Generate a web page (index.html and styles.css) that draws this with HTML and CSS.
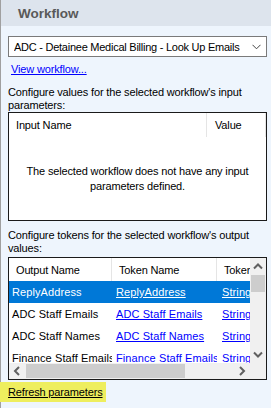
FILE: index.html
```html
<!DOCTYPE html>
<html>
<head>
<meta charset="utf-8">
<link rel="stylesheet" href="styles.css">
</head>
<body>
<div class="panel">
  <div class="header"><span class="title">Workflow</span></div>
  <div class="content">
    <div class="combo">
      <span class="combo-text">ADC - Detainee Medical Billing - Look Up Emails</span>
      <svg class="combo-arrow" width="9" height="6" viewBox="0 0 9 6"><path d="M0.5 0.8 L4.5 4.8 L8.5 0.8" fill="none" stroke="#444" stroke-width="1"/></svg>
    </div>
    <a class="link view-link">View workflow...</a>
    <div class="label label-in">Configure values for the selected workflow's input parameters:</div>
    <div class="box in-box">
      <div class="in-head">
        <div class="hcell in-c1">Input Name</div>
        <div class="hcell in-c2">Value</div>
      </div>
      <div class="empty-msg">The selected workflow does not have any input parameters defined.</div>
    </div>
    <div class="label label-out">Configure tokens for the selected workflow's output values:</div>
    <div class="box out-box">
      <div class="out-main">
        <div class="viewport">
          <div class="orow ohead">
            <div class="hcell oc1">Output Name</div>
            <div class="hcell oc2">Token Name</div>
            <div class="hcell oc3">Token Type</div>
          </div>
          <div class="orow drow selected">
            <div class="dcell oc1">ReplyAddress</div>
            <div class="dcell oc2"><span class="u">ReplyAddress</span></div>
            <div class="dcell oc3"><span class="u">String</span></div>
          </div>
          <div class="orow drow">
            <div class="dcell oc1">ADC Staff Emails</div>
            <div class="dcell oc2"><span class="u">ADC Staff Emails</span></div>
            <div class="dcell oc3"><span class="u">String</span></div>
          </div>
          <div class="orow drow">
            <div class="dcell oc1">ADC Staff Names</div>
            <div class="dcell oc2"><span class="u">ADC Staff Names</span></div>
            <div class="dcell oc3"><span class="u">String</span></div>
          </div>
          <div class="orow drow">
            <div class="dcell oc1">Finance Staff Emails</div>
            <div class="dcell oc2"><span class="u">Finance Staff Emails</span></div>
            <div class="dcell oc3"><span class="u">String</span></div>
          </div>
        </div>
        <div class="vscroll">
          <svg class="arr" width="16" height="17" viewBox="0 0 16 17"><path d="M4 10.5 L8 6.5 L12 10.5" fill="none" stroke="#606060" stroke-width="2"/></svg>
          <div class="vthumb"></div>
          <div class="vspace"></div>
          <svg class="arr" width="16" height="17" viewBox="0 0 16 17"><path d="M4 6.5 L8 10.5 L12 6.5" fill="none" stroke="#606060" stroke-width="2"/></svg>
        </div>
      </div>
      <div class="hbar">
        <div class="hscroll">
          <svg class="arr" width="17" height="16" viewBox="0 0 17 16"><path d="M10 4 L6 8 L10 12" fill="none" stroke="#606060" stroke-width="2"/></svg>
          <div class="hthumb"></div>
          <div class="hspace"></div>
          <svg class="arr" width="17" height="16" viewBox="0 0 17 16"><path d="M7 4 L11 8 L7 12" fill="none" stroke="#606060" stroke-width="2"/></svg>
        </div>
        <div class="corner"></div>
      </div>
    </div>
    <div class="refresh"><a class="link refresh-link">Refresh parameters</a></div>
  </div>
</div>
</body>
</html>
```

FILE: styles.css
```css
html, body {
  margin: 0;
  padding: 0;
}
body {
  width: 271px;
  height: 408px;
  overflow: hidden;
  font-family: "Liberation Sans", Arial, sans-serif;
  font-size: 11px;
  letter-spacing: -0.15px;
  color: #000;
  background: #eef5fd;
}
.panel {
  width: 271px;
  height: 408px;
  box-sizing: border-box;
  border-left: 1px solid #a0a0a0;
  display: flex;
  flex-direction: column;
  background: #eef5fd;
}
.header {
  height: 26px;
  background: #dde4ed;
  display: flex;
  align-items: center;
  padding-left: 17px;
  box-sizing: border-box;
}
.title {
  font-weight: bold;
  font-size: 13.5px;
  letter-spacing: 0;
  color: #595959;
  padding-top: 1px;
}
.content {
  display: flex;
  flex-direction: column;
  padding-left: 7px;
  padding-right: 4px;
}
.combo {
  margin-top: 10px;
  height: 21px;
  box-sizing: border-box;
  border: 1px solid #7a7a7a;
  background: #fff;
  display: flex;
  align-items: center;
  padding-left: 5px;
  padding-right: 5px;
}
.combo-text {
  flex: 1;
  white-space: nowrap;
  overflow: hidden;
  font-size: 11px;
  letter-spacing: -0.25px;
}
.combo-arrow {
  display: block;
}
.link {
  color: #0000ff;
  text-decoration: underline;
}
.view-link {
  margin-top: 5px;
  margin-left: 3px;
  line-height: 14px;
  align-self: flex-start;
}
.label {
  line-height: 13px;
}
.label-in {
  margin-top: 10px;
}
.label-out {
  margin-top: 8px;
}
.box {
  border: 1px solid #1a1a1a;
  background: #fff;
  box-sizing: border-box;
}
.in-box {
  height: 109px;
  display: flex;
  flex-direction: column;
}
.in-head {
  display: flex;
  height: 24px;
}
.hcell {
  box-sizing: border-box;
  height: 100%;
  display: flex;
  align-items: center;
  border-right: 1px solid #e5e5e5;
  white-space: nowrap;
  overflow: hidden;
}
.in-c1 {
  width: 198px;
  padding-left: 7px;
}
.in-c2 {
  flex: 1;
  padding-left: 8px;
}
.empty-msg {
  text-align: center;
  line-height: 15px;
  padding: 27px 6px 0 6px;
}
.out-box {
  margin-top: 2px;
  height: 123px;
  display: flex;
  flex-direction: column;
}
.out-main {
  display: flex;
  height: 105px;
}
.viewport {
  flex: 1;
  overflow: hidden;
  display: flex;
  flex-direction: column;
}
.orow {
  display: flex;
  height: 22px;
  flex-shrink: 0;
  white-space: nowrap;
}
.ohead {
  height: 23px;
}
.drow {
  font-size: 11px;
  letter-spacing: 0.1px;
}
.oc1 {
  width: 103px;
  flex-shrink: 0;
}
.oc2 {
  width: 105px;
  flex-shrink: 0;
}
.oc3 {
  width: 80px;
  flex-shrink: 0;
}
.ohead .hcell {
  padding-left: 7px;
}
.dcell {
  box-sizing: border-box;
  display: flex;
  align-items: center;
  overflow: hidden;
  padding-left: 4px;
}
.dcell.oc1 {
  padding-left: 3px;
}
.dcell.oc3 {
  padding-left: 5px;
}
.dcell .u {
  color: #0000ff;
  text-decoration: underline;
}
.orow.selected {
  background: #0078d7;
  color: #fff;
}
.orow.selected .u {
  color: #fff;
}
.vscroll {
  width: 16px;
  background: #f0f0f0;
  display: flex;
  flex-direction: column;
}
.arr {
  display: block;
  flex-shrink: 0;
}
.vthumb {
  margin: 0 1px;
  height: 17px;
  background: #cdcdcd;
}
.vspace {
  flex: 1;
}
.hbar {
  display: flex;
  height: 16px;
}
.hscroll {
  flex: 1;
  display: flex;
  background: #f0f0f0;
}
.hthumb {
  width: 159px;
  margin: 1px 0;
  background: #cdcdcd;
}
.hspace {
  flex: 1;
}
.corner {
  width: 16px;
  background: #f0f0f0;
}
.refresh {
  margin-top: 2px;
  margin-left: -8px;
  width: 106px;
  height: 20px;
  background: #eeee5e;
  display: flex;
  align-items: center;
  padding-left: 8px;
  box-sizing: border-box;
}
.refresh-link {
  color: #000;
  white-space: nowrap;
}
```
